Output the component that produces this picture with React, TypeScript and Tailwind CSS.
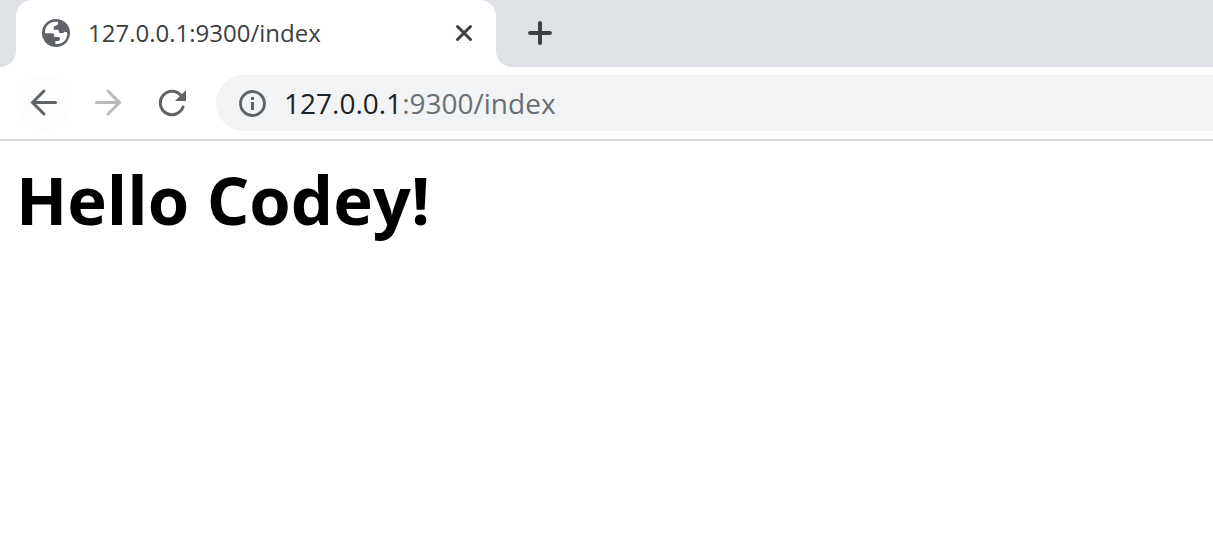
function GlobeIcon() {
  return (
    <svg viewBox="0 0 84 84" className="size-7 shrink-0" aria-hidden="true">
      <circle cx="42" cy="42" r="42" fill="#5f6368" />
      <path
        d="M48 9C25 6 8 20 9 43H30Q37 43 37 50V54H49Q54 54 54 59Q54 66 46 66H40V75C61 77 77 62 76 41Q72 38 68 38Q64 43 57 43Q50 43 50 36V32H35V26Q35 20 41 20Q48 20 48 13Z"
        fill="#fff"
      />
    </svg>
  );
}

function StrokeIcon({ d, width = 3 }: { d: string; width?: number }) {
  return (
    <svg
      viewBox="0 0 32 32"
      className="size-8"
      fill="none"
      stroke="currentColor"
      strokeWidth={width}
      strokeLinecap="round"
      aria-hidden="true"
    >
      <path d={d} />
    </svg>
  );
}

function TabStrip() {
  return (
    <div className="flex h-[67px]">
      <div className="w-4 shrink-0 rounded-br-2xl bg-[#dee1e6]" />
      <div className="w-[480px] bg-[#dee1e6]">
        <div className="flex h-full items-center rounded-t-2xl bg-white pr-4 pb-px pl-[26px]">
          <GlobeIcon />
          <span className="ml-[18px] flex-1 text-[24px] leading-8 text-[#3c4043]">
            127.0.0.1:9300/index
          </span>
          <button type="button" aria-label="Close tab" className="text-[#3c4043]">
            <StrokeIcon d="M9.5 9.5L22.5 22.5M22.5 9.5L9.5 22.5" />
          </button>
        </div>
      </div>
      <div className="flex flex-1 items-center rounded-bl-2xl bg-[#dee1e6] pb-px pl-7">
        <button type="button" aria-label="New tab" className="text-[#3c4043]">
          <StrokeIcon d="M16 6V26M6 16H26" width={4} />
        </button>
      </div>
    </div>
  );
}

function Toolbar() {
  return (
    <div className="flex items-center border-b-2 border-[#dadce0] py-2 pl-4 text-[#5f6368]">
      <button
        type="button"
        aria-label="Back"
        className="flex size-14 items-center justify-center rounded-full bg-[#fdfdfd]"
      >
        <StrokeIcon d="M27.5 15.5H5M16 4L4.5 15.5L16 27" />
      </button>
      <button
        type="button"
        aria-label="Forward"
        disabled
        className="ml-2 flex size-14 items-center justify-center text-[#bababc]"
      >
        <StrokeIcon d="M4.5 15.5H27M16 4L27.5 15.5L16 27" />
      </button>
      <button
        type="button"
        aria-label="Reload"
        className="ml-2 flex size-14 items-center justify-center"
      >
        <svg viewBox="0 0 32 32" className="size-8" fill="none" aria-hidden="true">
          <path
            d="M27 20A11.7 11.7 0 1 1 25 8.5"
            stroke="currentColor"
            strokeWidth="3"
            strokeLinecap="round"
          />
          <path d="M30 3V14H19Z" fill="currentColor" />
        </svg>
      </button>
      <div className="ml-4 flex h-14 flex-1 items-center rounded-l-full bg-[#f1f3f4] pl-[22px]">
        <svg viewBox="0 0 28 28" className="size-7" fill="none" aria-hidden="true">
          <circle cx="14.5" cy="14.5" r="12" stroke="currentColor" strokeWidth="2.8" />
          <path d="M13 8H16V11H13ZM13 13H16V21H13Z" fill="currentColor" />
        </svg>
        <span className="ml-[18px] text-[28px] leading-10 text-[#6b6e72]">
          <span className="text-[#202124]">127.0.0.1</span>:9300/index
        </span>
      </div>
    </div>
  );
}

export default function App() {
  return (
    <div className="min-h-screen bg-white font-['Open_Sans','Noto_Sans',sans-serif]">
      <header>
        <TabStrip />
        <Toolbar />
      </header>
      <main className="px-4 py-3">
        <h1 className="text-[67px] leading-[92px] font-bold text-black">Hello Codey!</h1>
      </main>
    </div>
  );
}
